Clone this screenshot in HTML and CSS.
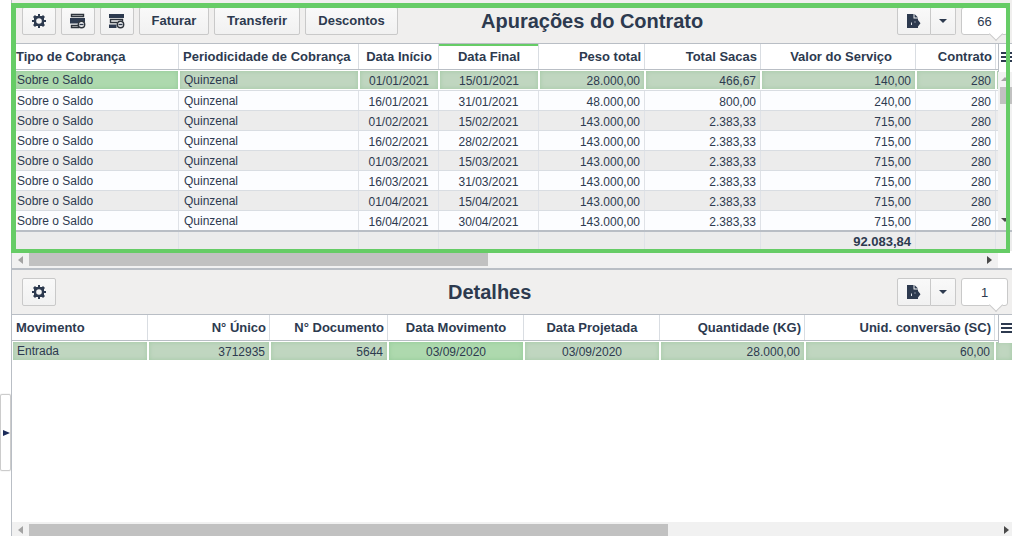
FILE: index.html
```html
<!DOCTYPE html>
<html lang="pt-BR">
<head>
    <meta charset="UTF-8">
    <meta name="viewport" content="width=device-width, initial-scale=1.0">
    <title>Apurações do Contrato</title>
    <link rel="stylesheet" href="styles.css">
</head>
<body>
    <svg class="symbols">
        <symbol id="gear" viewBox="0 0 14 14">
            <path fill-rule="evenodd" d="M6 0h2v2h2l1-1 2 2-1 1v2h2v2h-2v2l1 1-2 2-1-1H8v2H6v-2H4l-1 1-2-2 1-1V8H0V6h2V4L1 3l2-2 1 1h2zM7 4.200a2.800 2.800 0 1 0 0 5.600 2.800 2.800 0 0 0 0-5.600z"/>
        </symbol>
        <symbol id="export" viewBox="0 0 14 14">
            <path d="M0 0h6.500v4.500H11V6l2.500 3.200L11 12.500V14H0z"/>
            <path d="M7.500 0L11 3.500H7.500z"/>
            <path d="M4.500 8.500v2.500M7.500 8h1" stroke="#dfe3e8" stroke-width="1" fill="none"/>
        </symbol>
        <symbol id="burger" viewBox="0 0 14 10">
            <path d="M0 0h14v2H0zM0 4h14v2H0zM0 8h14v2H0z"/>
        </symbol>
    </svg>

    <aside class="sidebar">
        <div class="handle"><span class="arrow-right"></span></div>
    </aside>

    <main class="content">
        <section class="panel panel-top">
            <div class="toolbar">
                <button class="btn btn-icon"><svg width="14" height="14"><use href="#gear"/></svg></button>
                <button class="btn btn-icon">
                    <svg width="16" height="16" viewBox="0 0 16 16">
                        <path class="line" d="M1.500 1.500h12v2h-12zM1.500 12.500h7v2h-7z"/>
                        <path d="M0 5h15v4H9L7.500 10.500H0z"/>
                        <circle cx="11.500" cy="11.500" r="3.200" class="minus"/>
                        <path d="M9.500 10.800h4v1.400h-4z"/>
                    </svg>
                </button>
                <button class="btn btn-icon">
                    <svg width="16" height="16" viewBox="0 0 16 16">
                        <path d="M0 1h15v4H0zM0 11.500h7.500V15H0z"/>
                        <path class="line" d="M8 9.500H1.500v-3h12V8"/>
                        <circle cx="11.500" cy="11.500" r="3.200" class="minus"/>
                        <path d="M9.500 10.800h4v1.400h-4z"/>
                    </svg>
                </button>
                <button class="btn btn-faturar">Faturar</button>
                <button class="btn btn-transferir">Transferir</button>
                <button class="btn btn-descontos">Descontos</button>
                <h1 class="title title-top">Apurações do Contrato</h1>
                <div class="split">
                    <button class="btn btn-icon"><svg width="14" height="14"><use href="#export"/></svg></button>
                    <button class="btn btn-caret"><span class="caret"></span></button>
                </div>
                <div class="count">66</div>
            </div>

            <div class="grid grid-top">
                <div class="row head">
                    <div>Tipo de Cobrança</div><div>Periodicidade de Cobrança</div><div class="c">Data Início</div><div class="c sorted">Data Final</div><div class="r">Peso total</div><div class="r">Total Sacas</div><div class="r service">Valor do Serviço</div><div class="r">Contrato</div><div></div>
                </div>
                <div class="row selected">
                    <div class="focus">Sobre o Saldo</div><div>Quinzenal</div><div class="c">01/01/2021</div><div class="c">15/01/2021</div><div class="r">28.000,00</div><div class="r">466,67</div><div class="r">140,00</div><div class="r">280</div><div></div>
                </div>
                <div class="row">
                    <div>Sobre o Saldo</div><div>Quinzenal</div><div class="c">16/01/2021</div><div class="c">31/01/2021</div><div class="r">48.000,00</div><div class="r">800,00</div><div class="r">240,00</div><div class="r">280</div><div></div>
                </div>
                <div class="row odd">
                    <div>Sobre o Saldo</div><div>Quinzenal</div><div class="c">01/02/2021</div><div class="c">15/02/2021</div><div class="r">143.000,00</div><div class="r">2.383,33</div><div class="r">715,00</div><div class="r">280</div><div></div>
                </div>
                <div class="row">
                    <div>Sobre o Saldo</div><div>Quinzenal</div><div class="c">16/02/2021</div><div class="c">28/02/2021</div><div class="r">143.000,00</div><div class="r">2.383,33</div><div class="r">715,00</div><div class="r">280</div><div></div>
                </div>
                <div class="row odd">
                    <div>Sobre o Saldo</div><div>Quinzenal</div><div class="c">01/03/2021</div><div class="c">15/03/2021</div><div class="r">143.000,00</div><div class="r">2.383,33</div><div class="r">715,00</div><div class="r">280</div><div></div>
                </div>
                <div class="row">
                    <div>Sobre o Saldo</div><div>Quinzenal</div><div class="c">16/03/2021</div><div class="c">31/03/2021</div><div class="r">143.000,00</div><div class="r">2.383,33</div><div class="r">715,00</div><div class="r">280</div><div></div>
                </div>
                <div class="row odd">
                    <div>Sobre o Saldo</div><div>Quinzenal</div><div class="c">01/04/2021</div><div class="c">15/04/2021</div><div class="r">143.000,00</div><div class="r">2.383,33</div><div class="r">715,00</div><div class="r">280</div><div></div>
                </div>
                <div class="row last">
                    <div>Sobre o Saldo</div><div>Quinzenal</div><div class="c">16/04/2021</div><div class="c">30/04/2021</div><div class="r">143.000,00</div><div class="r">2.383,33</div><div class="r">715,00</div><div class="r">280</div><div></div>
                </div>
                <div class="row total">
                    <div></div><div></div><div></div><div></div><div></div><div></div><div class="r">92.083,84</div><div></div><div></div>
                </div>
                <div class="columns-menu"><svg width="14" height="10"><use href="#burger"/></svg></div>
                <div class="vscroll">
                    <span class="arrow-up"></span>
                    <span class="vthumb"></span>
                    <span class="arrow-down"></span>
                </div>
            </div>

            <div class="hscroll">
                <span class="arrow-left"></span>
                <span class="hthumb"></span>
                <span class="arrow-right"></span>
            </div>
            <div class="highlight"></div>
        </section>

        <section class="panel panel-bottom">
            <div class="toolbar">
                <button class="btn btn-icon"><svg width="14" height="14"><use href="#gear"/></svg></button>
                <h2 class="title title-bottom">Detalhes</h2>
                <div class="split">
                    <button class="btn btn-icon"><svg width="14" height="14"><use href="#export"/></svg></button>
                    <button class="btn btn-caret"><span class="caret"></span></button>
                </div>
                <div class="count">1</div>
            </div>

            <div class="grid grid-bottom">
                <div class="row head">
                    <div>Movimento</div><div class="r">N° Único</div><div class="r">N° Documento</div><div class="c">Data Movimento</div><div class="c">Data Projetada</div><div class="r">Quantidade (KG)</div><div class="r">Unid. conversão (SC)</div><div></div>
                </div>
                <div class="row selected">
                    <div>Entrada</div><div class="r">3712935</div><div class="r">5644</div><div class="c focus">03/09/2020</div><div class="c">03/09/2020</div><div class="r">28.000,00</div><div class="r">60,00</div><div></div>
                </div>
                <div class="columns-menu"><svg width="14" height="10"><use href="#burger"/></svg></div>
            </div>

            <div class="hscroll">
                <span class="arrow-left"></span>
                <span class="hthumb"></span>
                <span class="arrow-right"></span>
            </div>
        </section>
    </main>
</body>
</html>
```

FILE: styles.css
```css
:root {
    --text: #2d3a4f;
    --bar: #f0efee;
    --line: #b9bec5;
    --soft-line: #d9dde2;
    --green: #66cc66;
}

* {
    margin: 0;
    padding: 0;
    box-sizing: border-box;
}

body {
    width: 1012px;
    height: 536px;
    display: flex;
    overflow: hidden;
    background: #fff;
    color: var(--text);
    font-family: "Liberation Sans", Arial, sans-serif;
    font-size: 12px;
}

svg {
    display: block;
    flex: none;
    fill: var(--text);
}

.symbols {
    position: absolute;
    width: 0;
    height: 0;
}

/* collapsed side menu */
.sidebar {
    width: 11px;
    padding-top: 394px;
}

.handle {
    height: 77px;
    border: 1px solid #ccc;
    border-radius: 2px;
    box-shadow: 0 0 1px #aaa;
    display: flex;
    align-items: center;
    justify-content: flex-end;
}

.arrow-right {
    border: 4px solid transparent;
    border-left: 5px solid #4a4a4a;
    border-right: 0;
}

.handle .arrow-right {
    border-width: 3px 0 3px 7px;
    border-left-color: #1c2c5a;
}

.content {
    flex: 1;
    min-width: 0;
    display: flex;
    flex-direction: column;
}

.panel {
    position: relative;
    border-left: 1px solid var(--line);
    display: flex;
    flex-direction: column;
}

.panel-top {
    height: 270px;
    border-bottom: 2px solid var(--line);
}

.panel-bottom {
    flex: 1;
}

/* toolbar */
.toolbar {
    height: 45px;
    padding: 8px 4px 0 10px;
    display: flex;
    gap: 5px;
    background: var(--bar);
    border-bottom: 1px solid var(--line);
}

.panel-top .toolbar {
    height: 44px;
    padding-top: 7px;
}

.btn {
    height: 28px;
    padding-bottom: 1px;
    display: flex;
    align-items: center;
    justify-content: center;
    background: linear-gradient(#f9f9f9, #f1f1f1);
    border: 1px solid #c9c9c9;
    border-radius: 2px;
    color: var(--text);
    font: bold 13px "Liberation Sans", Arial, sans-serif;
}

.btn-icon {
    width: 34px;
    padding-bottom: 0;
}

.btn-icon .line,
.btn-icon .minus {
    fill: none;
    stroke: #2e343c;
    stroke-width: 1.4;
}

.btn-icon .minus {
    fill: #f4f4f4;
}

.btn-faturar {
    width: 70px;
}

.btn-transferir {
    width: 86px;
}

.btn-descontos {
    width: 93px;
}

.title {
    flex: 1;
    font-size: 20px;
    line-height: 28px;
    white-space: nowrap;
}

.title-top {
    padding-left: 78px;
}

.title-bottom {
    padding-left: 387px;
}

.split {
    display: flex;
}

.split .btn-icon {
    border-radius: 2px 0 0 2px;
}

.btn-caret {
    width: 25px;
    border-left: 0;
    border-radius: 0 2px 2px 0;
}

.caret {
    border: 4px solid transparent;
    border-top-color: var(--text);
    border-bottom: 0;
}

.count {
    position: relative;
    width: 47px;
    height: 28px;
    background: #fff;
    border: 1px solid #c9c9c9;
    border-radius: 3px;
    font-size: 13px;
    line-height: 27px;
    text-align: center;
}

.count::after {
    content: "";
    position: absolute;
    left: 29px;
    top: 21px;
    width: 9px;
    height: 9px;
    background: #fff;
    border: solid #c9c9c9;
    border-width: 0 1px 1px 0;
    transform: rotate(45deg);
}

/* data grids */
.grid {
    position: relative;
}

.row {
    display: grid;
    height: 20px;
    background: #fcfdff;
    border-bottom: 1px solid var(--soft-line);
    line-height: 18px;
    white-space: nowrap;
}

.grid-top .row {
    grid-template-columns: 167px 180px 80px 100px 106px 116px 155px 80px 1fr;
}

.grid-bottom .row {
    grid-template-columns: 136px 122px 118px 136px 136px 145px 190px 1fr;
}

.row > div {
    padding: 1px 4px 0 5px;
    border-right: 1px solid #dfe2e7;
    overflow: hidden;
}

.row > div:last-child {
    border-right: 0;
}

.row .c {
    padding: 2px 4px 0;
    text-align: center;
}

.row .r {
    padding-top: 2px;
    text-align: right;
}

.odd {
    background: #ececec;
}

.row.head {
    height: 26px;
    background: #fff;
    border-color: var(--line);
    font-size: 13px;
    font-weight: bold;
    line-height: 25px;
}

.head > div,
.head .r,
.head .c {
    padding: 0 3px 0 4px;
    border-color: var(--soft-line);
}

.head .service {
    padding-right: 23px;
}

.head .sorted {
    box-shadow: inset 0 2px var(--green);
}

.row.selected {
    height: 21px;
    padding: 1px 0;
    background: #fff;
}

.selected > div {
    padding: 0 4px;
    background: #c0d6c0;
    border: solid #fff;
    border-width: 0 1px;
    box-shadow: inset 0 0 5px #a3c9a5;
}

.selected .c,
.selected .r {
    padding-top: 1px;
}

.selected .focus {
    background: #aed9ae;
    box-shadow: inset 0 0 5px #94cb98;
}

.grid-bottom .selected {
    border-bottom: 0;
    height: 20px;
}

.row.last {
    height: 21px;
    border-bottom: 2px solid var(--line);
}

.row.total {
    height: 19px;
    background: #ececec;
    border: 0;
    font-size: 13px;
    font-weight: bold;
}

.total .r {
    padding-top: 1px;
}

.columns-menu {
    position: absolute;
    top: 0;
    right: 0;
    width: 14px;
    height: 28px;
    padding: 8px 0 0 2px;
    overflow: hidden;
    background: #fff;
    border-left: 1px solid var(--line);
}

.vscroll {
    position: absolute;
    top: 28px;
    right: 0;
    width: 14px;
    height: 158px;
    padding: 5px 0 8px 2px;
    overflow: hidden;
    display: flex;
    flex-direction: column;
    background: #f1f1f1;
}

.vthumb {
    width: 14px;
    height: 17px;
    margin: 6px 0 auto;
    background: #c1c1c1;
}

.arrow-up,
.arrow-down {
    width: 0;
    margin-left: 1px;
    border: 4px solid transparent;
}

.arrow-up {
    border-top: 0;
    border-bottom-color: #a3a3a3;
}

.arrow-down {
    border-bottom: 0;
    border-top-color: #4a4a4a;
}

.hscroll {
    width: 986px;
    flex: 1;
    display: flex;
    align-items: center;
    padding: 0 6px;
    background: #f1f1f1;
}

.arrow-left {
    border: 4px solid transparent;
    border-right: 5px solid #a3a3a3;
    border-left: 0;
}

.hthumb {
    width: 459px;
    height: 13px;
    margin: 0 auto 0 6px;
    background: #c1c1c1;
}

.panel-bottom .grid {
    flex: 1;
}

.panel-bottom .hscroll {
    flex: none;
    width: auto;
    height: 14px;
    padding: 2px 3px 0 6px;
}

.panel-bottom .hthumb {
    width: 639px;
}

/* frame drawn around the upper grid */
.highlight {
    position: absolute;
    left: -1px;
    top: 3px;
    width: 999px;
    height: 250px;
    border: solid var(--green);
    border-width: 5px 4px 4px 5px;
    pointer-events: none;
}
```
